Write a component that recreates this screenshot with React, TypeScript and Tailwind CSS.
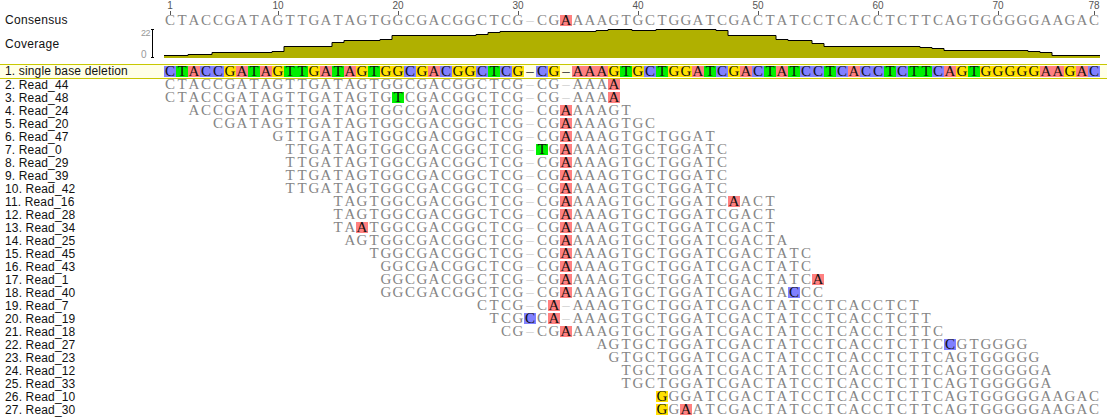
import React from 'react';

const REF = 'CTACCGATAGTTGATAGTGGCGACGGCTCG-CG-AAAGTGCTGGATCGACTATCCTCACCTCTTCAGTGGGGGAAGAC';
const CONSENSUS = 'CTACCGATAGTTGATAGTGGCGACGGCTCG-CGAAAAGTGCTGGATCGACTATCCTCACCTCTTCAGTGGGGGAAGAC';

// start / end columns are 1-based, edits are column -> base
const READS: { name: string; start: number; end: number; edits?: Record<number, string> }[] = [
  { name: '2. Read_44', start: 1, end: 38, edits: { 38: 'A' } },
  { name: '3. Read_48', start: 1, end: 38, edits: { 20: 'T', 38: 'A' } },
  { name: '4. Read_24', start: 3, end: 39, edits: { 34: 'A' } },
  { name: '5. Read_20', start: 5, end: 41, edits: { 34: 'A' } },
  { name: '6. Read_47', start: 10, end: 46, edits: { 34: 'A' } },
  { name: '7. Read_0', start: 11, end: 47, edits: { 32: 'T', 34: 'A' } },
  { name: '8. Read_29', start: 11, end: 47, edits: { 34: 'A' } },
  { name: '9. Read_39', start: 11, end: 47, edits: { 34: 'A' } },
  { name: '10. Read_42', start: 11, end: 47, edits: { 34: 'A' } },
  { name: '11. Read_16', start: 15, end: 51, edits: { 34: 'A', 48: 'A' } },
  { name: '12. Read_28', start: 15, end: 51, edits: { 34: 'A' } },
  { name: '13. Read_34', start: 15, end: 51, edits: { 17: 'A', 34: 'A' } },
  { name: '14. Read_25', start: 16, end: 52, edits: { 34: 'A' } },
  { name: '15. Read_45', start: 18, end: 54, edits: { 34: 'A' } },
  { name: '16. Read_43', start: 19, end: 54, edits: { 34: 'A' } },
  { name: '17. Read_1', start: 19, end: 55, edits: { 34: 'A', 55: 'A' } },
  { name: '18. Read_40', start: 19, end: 55, edits: { 34: 'A', 53: 'C' } },
  { name: '19. Read_7', start: 27, end: 63, edits: { 33: 'A' } },
  { name: '20. Read_19', start: 28, end: 64, edits: { 31: 'C', 33: 'A' } },
  { name: '21. Read_18', start: 29, end: 65, edits: { 34: 'A' } },
  { name: '22. Read_27', start: 37, end: 72, edits: { 66: 'C' } },
  { name: '23. Read_23', start: 38, end: 73 },
  { name: '24. Read_12', start: 39, end: 74 },
  { name: '25. Read_33', start: 39, end: 74 },
  { name: '26. Read_10', start: 42, end: 78, edits: { 42: 'G' } },
  { name: '27. Read_30', start: 42, end: 78, edits: { 42: 'G', 44: 'A' } },
];

// first column of each step and the height of the top edge inside the plot
const COVERAGE: [number, number][] = [
  [1, 28], [3, 27], [5, 25], [10, 24], [11, 19], [15, 15], [16, 13], [19, 12], [20, 8], [27, 7], [28, 5],
  [29, 4], [37, 3], [38, 2], [40, 3], [42, 2], [47, 3], [48, 8], [52, 12], [53, 13], [55, 16], [56, 19],
  [64, 20], [65, 21], [66, 23], [73, 24], [74, 25], [75, 28],
];

const BASE_BG: Record<string, string> = {
  A: 'bg-[#ff8080]',
  C: 'bg-[#8080ff]',
  G: 'bg-[#ffe000]',
  T: 'bg-[#00f000]',
};

const sans = 'font-["Liberation_Sans",Arial,sans-serif]';

const Cell = ({ base, marked }: { base: string; marked: boolean }) => {
  if (base === '-') {
    return <span className={`w-3 h-[11px] shrink-0 text-center leading-[11px] ${marked ? 'text-[#222]' : 'text-[#d0d0d0]'}`}>–</span>;
  }
  return (
    <span className={`w-3 h-[11px] shrink-0 text-center leading-[11px] ${marked ? `text-[#111] ${BASE_BG[base] ?? ''}` : 'text-[#858585]'}`}>
      {base}
    </span>
  );
};

const Bases = ({ start = 1, end = 78, seq = REF, marks }: { start?: number; end?: number; seq?: string; marks: (col: number, base: string) => boolean }) => (
  <div className='flex font-["Liberation_Serif",serif] text-[15px]'>
    {Array.from({ length: end }, (_, i) => {
      const col = i + 1;
      if (col < start) return <span key={col} className="w-3 shrink-0" />;
      return <Cell key={col} base={seq[i]} marked={marks(col, seq[i])} />;
    })}
  </div>
);

const Coverage = () => {
  const steps: string[] = [];
  COVERAGE.forEach(([col, y], i) => {
    const x0 = (col - 1) * 12;
    const next = COVERAGE[i + 1];
    const x1 = next ? (next[0] - 1) * 12 : 936;
    steps.push(`${x0},${y}`, `${x1},${y}`);
  });
  return (
    <svg width="936" height="32" viewBox="0 0 936 32" className="block">
      <polygon points={`0,31 ${steps.join(' ')} 936,31`} fill="#b0b000" />
      <polyline points={steps.join(' ')} fill="none" stroke="#000" strokeWidth="1" transform="translate(0,0.5)" />
    </svg>
  );
};

export default function App() {
  return (
    <div className={`w-[1107px] h-[418px] overflow-hidden bg-white text-[12px] text-[#111] ${sans}`}>
      {/* Ruler */}
      <div className="flex h-[15px]">
        <div className="w-[164px] shrink-0" />
        {Array.from({ length: 78 }, (_, i) => {
          const col = i + 1;
          const labelled = col === 1 || col === 78 || col % 10 === 0;
          return (
            <div key={col} className="w-3 shrink-0 flex flex-col items-center">
              {labelled && (
                <>
                  <span className="text-[10px] leading-[11px] h-[11px] text-[#555] whitespace-nowrap">{col}</span>
                  <span className="w-px h-[4px] bg-[#555]" />
                </>
              )}
            </div>
          );
        })}
      </div>

      {/* Consensus */}
      <div className="flex h-[12px]">
        <div className="w-[164px] shrink-0 pl-[5px] leading-[11px] tracking-[0.3px]">Consensus</div>
        <Bases seq={CONSENSUS} marks={(col) => col === 34} />
      </div>

      {/* Coverage */}
      <div className="flex h-[32px]">
        <div className="w-[164px] shrink-0 flex pl-[5px]">
          <div className="w-[136px] pt-[10px] leading-[14px] tracking-[0.3px]">Coverage</div>
          <div className="w-[10px] flex flex-col justify-between items-start pt-[2px] text-[9px] leading-[8px] tracking-[-0.6px] text-[#999]">
            <span>22</span>
            <span className="text-[10px] tracking-normal">0</span>
          </div>
          <div className="mt-[2px] w-[3px] h-[29px] border-y border-black flex justify-center">
            <span className="w-px bg-black" />
          </div>
        </div>
        <Coverage />
      </div>

      {/* Selected reference row */}
      <div className="mt-[5px] flex h-[15px] items-center border-y border-[#c8c800] bg-[#ffffe6]">
        <div className="w-[164px] shrink-0 pl-[5px] leading-[13px] tracking-[0.15px]">1. single base deletion</div>
        <Bases marks={() => true} />
      </div>

      {/* Reads */}
      {READS.map((read) => {
        const seq = REF.split('').map((b, i) => read.edits?.[i + 1] ?? b).join('');
        return (
          <div key={read.name} className="flex h-[13px]">
            <div className="w-[164px] shrink-0 pl-[5px] leading-[13px] tracking-[0.15px]">{read.name}</div>
            <Bases start={read.start} end={read.end} seq={seq} marks={(col) => read.edits?.[col] !== undefined} />
          </div>
        );
      })}
    </div>
  );
}
